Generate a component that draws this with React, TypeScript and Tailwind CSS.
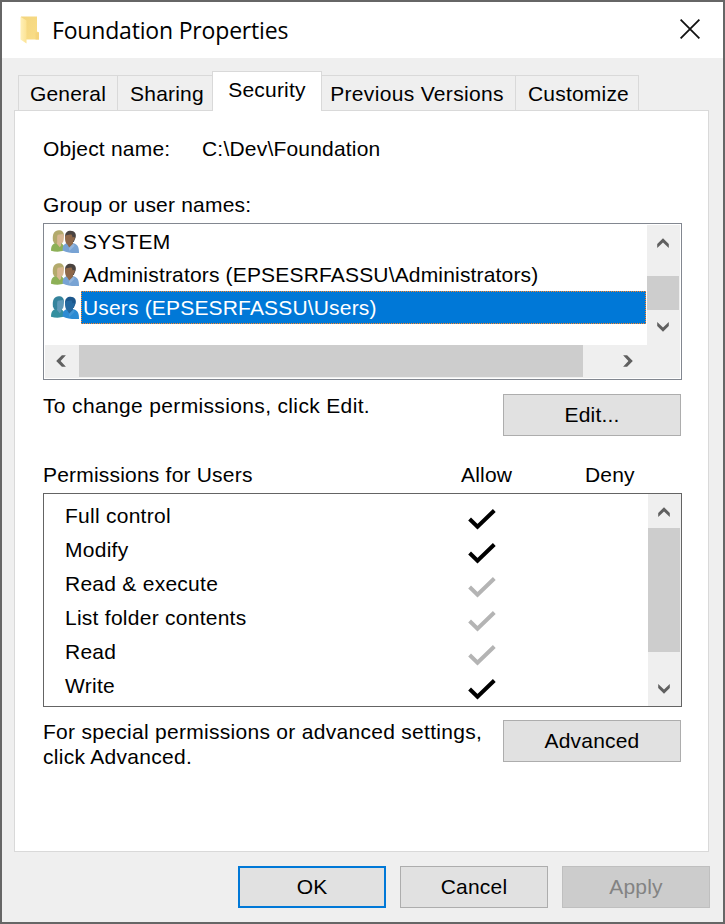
import type { ReactNode } from "react";

const rotations = { up: "", right: "rotate-90", down: "rotate-180", left: "-rotate-90" };

function Chevron({ dir, className = "" }: { dir: keyof typeof rotations; className?: string }) {
  return (
    <svg viewBox="0 0 12 10" className={`h-[10px] w-[12px] shrink-0 ${rotations[dir]} ${className}`}>
      <path d="M0.2 5.9 6 0.2 11.8 5.9V9.9L6 4.6 0.2 9.9Z" fill="#606060" />
    </svg>
  );
}

function FolderIcon() {
  return (
    <svg viewBox="0 0 20 28" className="h-[28px] w-[20px] shrink-0">
      <defs>
        <linearGradient id="folder-back" x1="0" y1="0" x2="1" y2="1">
          <stop offset="0" stopColor="#f3d57f" />
          <stop offset="1" stopColor="#fade87" />
        </linearGradient>
        <linearGradient id="folder-front" x1="0" y1="0" x2="1" y2="0">
          <stop offset="0" stopColor="#fff0b8" />
          <stop offset="1" stopColor="#fce394" />
        </linearGradient>
      </defs>
      <path d="M1 0.5H17V15.5L19 16.5V23.5H3L1 20Z" fill="url(#folder-back)" />
      <path d="M15.5 16.5H19V23.5H15.5Z" fill="#f5d47c" />
      <path d="M0.5 0.8 6.5 4.5V27.5L0.5 23.5Z" fill="url(#folder-front)" />
    </svg>
  );
}

function GroupIcon({ selected = false }: { selected?: boolean }) {
  const c = selected
    ? { hair: "#35839c", face: "#6099b8", top: "#338f9f", hair2: "#1c578c", face2: "#24689f", top2: "#2c8bd3" }
    : { hair: "#b3aa6c", face: "#d8b792", top: "#8db057", hair2: "#4a4340", face2: "#8f6849", top2: "#78a3d4" };
  return (
    <svg viewBox="0 0 28 24" className="h-[24px] w-[28px] shrink-0">
      <path d="M0 20.8C0 15.5 2 13.4 5.5 12.8L10.5 13 13 16V20.3C9 22.3 4 21.8 0 20.8Z" fill={c.top} />
      <path d="M1.9 10.5C1 3.8 3.7.3 7.6.3c3.6 0 5.6 2 5.2 5.5L11 12 6 14 3 13Z" fill={c.hair} />
      <path d="M6.8 4.8 12.4 4C13.1 6 13 9 12.3 11.4 11.8 12.8 11 13.2 10 13.2L10.2 15.4 8.8 17.2 5.8 13.8C7 12.5 5.2 7.5 6.8 4.8Z" fill={c.face} />
      <path d="M11.6 20.6C11.6 15.7 12.6 14 16 13.2L22.7 13.2C26.6 14.5 28 16.8 28 23 22 23.4 16.5 22.9 11.6 20.6Z" fill={c.top2} />
      <path d="M14 6.5C14 2.6 16.3.8 19.6.8 23.7.8 25.6 3.9 24.6 7.6L22.8 12 17 11Z" fill={c.hair2} />
      <path d="M14.2 5.6C16.5 5.2 18.5 4 20.6 4.6 21.4 6 21.2 7.4 22 7.6 22.8 6.6 24 7.2 23.7 8.6 23.5 10.2 22.6 11 21.8 11.2L22.2 13.6 18.2 17.6 16.4 14.6C14.2 13.4 13.7 9 14.2 5.6Z" fill={c.face2} />
      <path d="M17.8 18 22.2 13.6 23.7 15.7 18.4 21Z" fill="#ffffff" fillOpacity={selected ? 0.1 : 0.2} />
    </svg>
  );
}

function Tab({ children, className }: { children: ReactNode; className: string }) {
  return (
    <div className={`flex h-[35px] items-center justify-center border-t border-r border-[#d9d9d9] pt-0.5 whitespace-nowrap ${className}`}>
      {children}
    </div>
  );
}

function Button({ children, className }: { children: ReactNode; className: string }) {
  return (
    <button className={`flex h-[42px] shrink-0 items-center justify-center ${className}`}>
      {children}
    </button>
  );
}

const principals = [
  { name: "SYSTEM", selected: false },
  { name: "Administrators (EPSESRFASSU\\Administrators)", selected: false },
  { name: "Users (EPSESRFASSU\\Users)", selected: true },
];

const permissions = [
  { name: "Full control", inherited: false },
  { name: "Modify", inherited: false },
  { name: "Read & execute", inherited: true },
  { name: "List folder contents", inherited: true },
  { name: "Read", inherited: true },
  { name: "Write", inherited: false },
];

export default function App() {
  return (
    <div className="flex h-[924px] w-[725px] flex-col border-2 border-[#666666] bg-[#efefef] font-['Liberation_Sans',Arial,sans-serif] text-[21px] leading-[26px] tracking-[0.2px] text-black">
      <header className="flex h-[56px] shrink-0 items-center bg-white pr-[23px] pl-[18px]">
        <FolderIcon />
        <h1 className="ml-3 font-['Open_Sans','Noto_Sans',sans-serif] text-[23px] tracking-[-0.18px]">Foundation Properties</h1>
        <svg viewBox="0 0 20 20" className="mb-0.5 ml-auto h-5 w-5">
          <path d="M0.6 0.6 19.4 19.4M19.4 0.6 0.6 19.4" stroke="#111" strokeWidth="1.8" />
        </svg>
      </header>

      <nav className="flex h-[52px] shrink-0 items-end pl-4">
        <Tab className="w-[100px] border-l">General</Tab>
        <Tab className="w-[94px] border-r-0 pl-1">Sharing</Tab>
        <div className="relative -mb-px flex h-[40px] w-[110px] items-center justify-center border-x border-t border-[#d9d9d9] bg-white pb-1">Security</div>
        <Tab className="w-[194px] pr-[3px] tracking-[0.32px]">Previous Versions</Tab>
        <Tab className="w-[123px] pl-[3px]">Customize</Tab>
      </nav>

      <main className="ml-3 flex h-[742px] w-[695px] shrink-0 flex-col border border-[#d9d9d9] bg-white pl-7">
        <div className="mt-[25px] flex">
          <span className="w-[159px]">Object name:</span>
          <span>C:\Dev\Foundation</span>
        </div>
        <div className="mt-[30px]">Group or user names:</div>

        <section className="mt-[5px] flex h-[157px] w-[639px] shrink-0 flex-col border border-[#828790] p-px">
          <div className="flex h-[120px]">
            <ul className="w-[602px]">
              {principals.map((p) => (
                <li key={p.name} className="flex h-[33px] items-center pr-px pl-[6px] tracking-[0.17px]">
                  <GroupIcon selected={p.selected} />
                  <span
                    className={`ml-0.5 flex h-[33px] flex-1 items-center border border-dotted pl-px whitespace-nowrap ${
                      p.selected ? "border-[#ff8728] bg-[#0078d7] text-white" : "border-transparent"
                    }`}
                  >
                    {p.name}
                  </span>
                </li>
              ))}
            </ul>
            <div className="flex w-[33px] flex-col items-center bg-[#efefef] pr-px">
              <Chevron dir="up" className="mt-[13px]" />
              <div className="mt-[28px] h-[34px] w-8 bg-[#cdcdcd]" />
              <Chevron dir="down" className="mt-[12px]" />
            </div>
          </div>
          <div className="flex h-[33px] items-center bg-[#efefef] pb-px">
            <Chevron dir="left" className="ml-[10px]" />
            <div className="ml-[12px] h-8 w-[504px] bg-[#cdcdcd]" />
            <Chevron dir="right" className="ml-[39px]" />
          </div>
        </section>

        <div className="mt-[14px] flex w-[638px] justify-between">
          <span className="-mt-px tracking-[0.35px]">To change permissions, click Edit.</span>
          <Button className="w-[178px] border border-[#adadad] bg-[#e1e1e1]">Edit...</Button>
        </div>

        <div className="mt-[26px] flex">
          <span className="w-[418px]">Permissions for Users</span>
          <span className="w-[124px]">Allow</span>
          <span>Deny</span>
        </div>

        <section className="mt-[5px] flex h-[214px] w-[639px] shrink-0 border border-[#646464]">
          <ul className="flex-1 pt-[5px] pl-[21px]">
            {permissions.map((p) => (
              <li key={p.name} className="flex h-[34px] items-center">
                <span className="w-[403px] tracking-[0.26px]">{p.name}</span>
                <svg viewBox="0 0 28 22" className="mt-[7px] h-[22px] w-7">
                  <path d="M1.6 10 9.5 17.7 26.3 1.5" fill="none" stroke={p.inherited ? "#b4b4b4" : "#000"} strokeWidth="4" />
                </svg>
              </li>
            ))}
          </ul>
          <div className="flex w-[33px] flex-col items-center bg-[#efefef] pr-px">
            <Chevron dir="up" className="mt-[13px]" />
            <div className="mt-[11px] h-[124px] w-8 bg-[#cdcdcd]" />
            <Chevron dir="down" className="mt-[32px]" />
          </div>
        </section>

        <div className="mt-[13px] flex w-[638px] justify-between">
          <p className="-mt-px leading-[25px] tracking-[0.29px] whitespace-nowrap">
            For special permissions or advanced settings,
            <br />
            click Advanced.
          </p>
          <Button className="w-[178px] border border-[#adadad] bg-[#e1e1e1]">Advanced</Button>
        </div>
      </main>

      <footer className="mt-[14px] flex justify-end gap-[14px] pr-[13px]">
        <Button className="w-[148px] border-2 border-[#0078d7] bg-[#e1e1e1]">OK</Button>
        <Button className="w-[148px] border border-[#adadad] bg-[#e1e1e1]">Cancel</Button>
        <Button className="w-[148px] border border-[#bfbfbf] bg-[#cccccc] text-[#838383]">Apply</Button>
      </footer>
    </div>
  );
}
